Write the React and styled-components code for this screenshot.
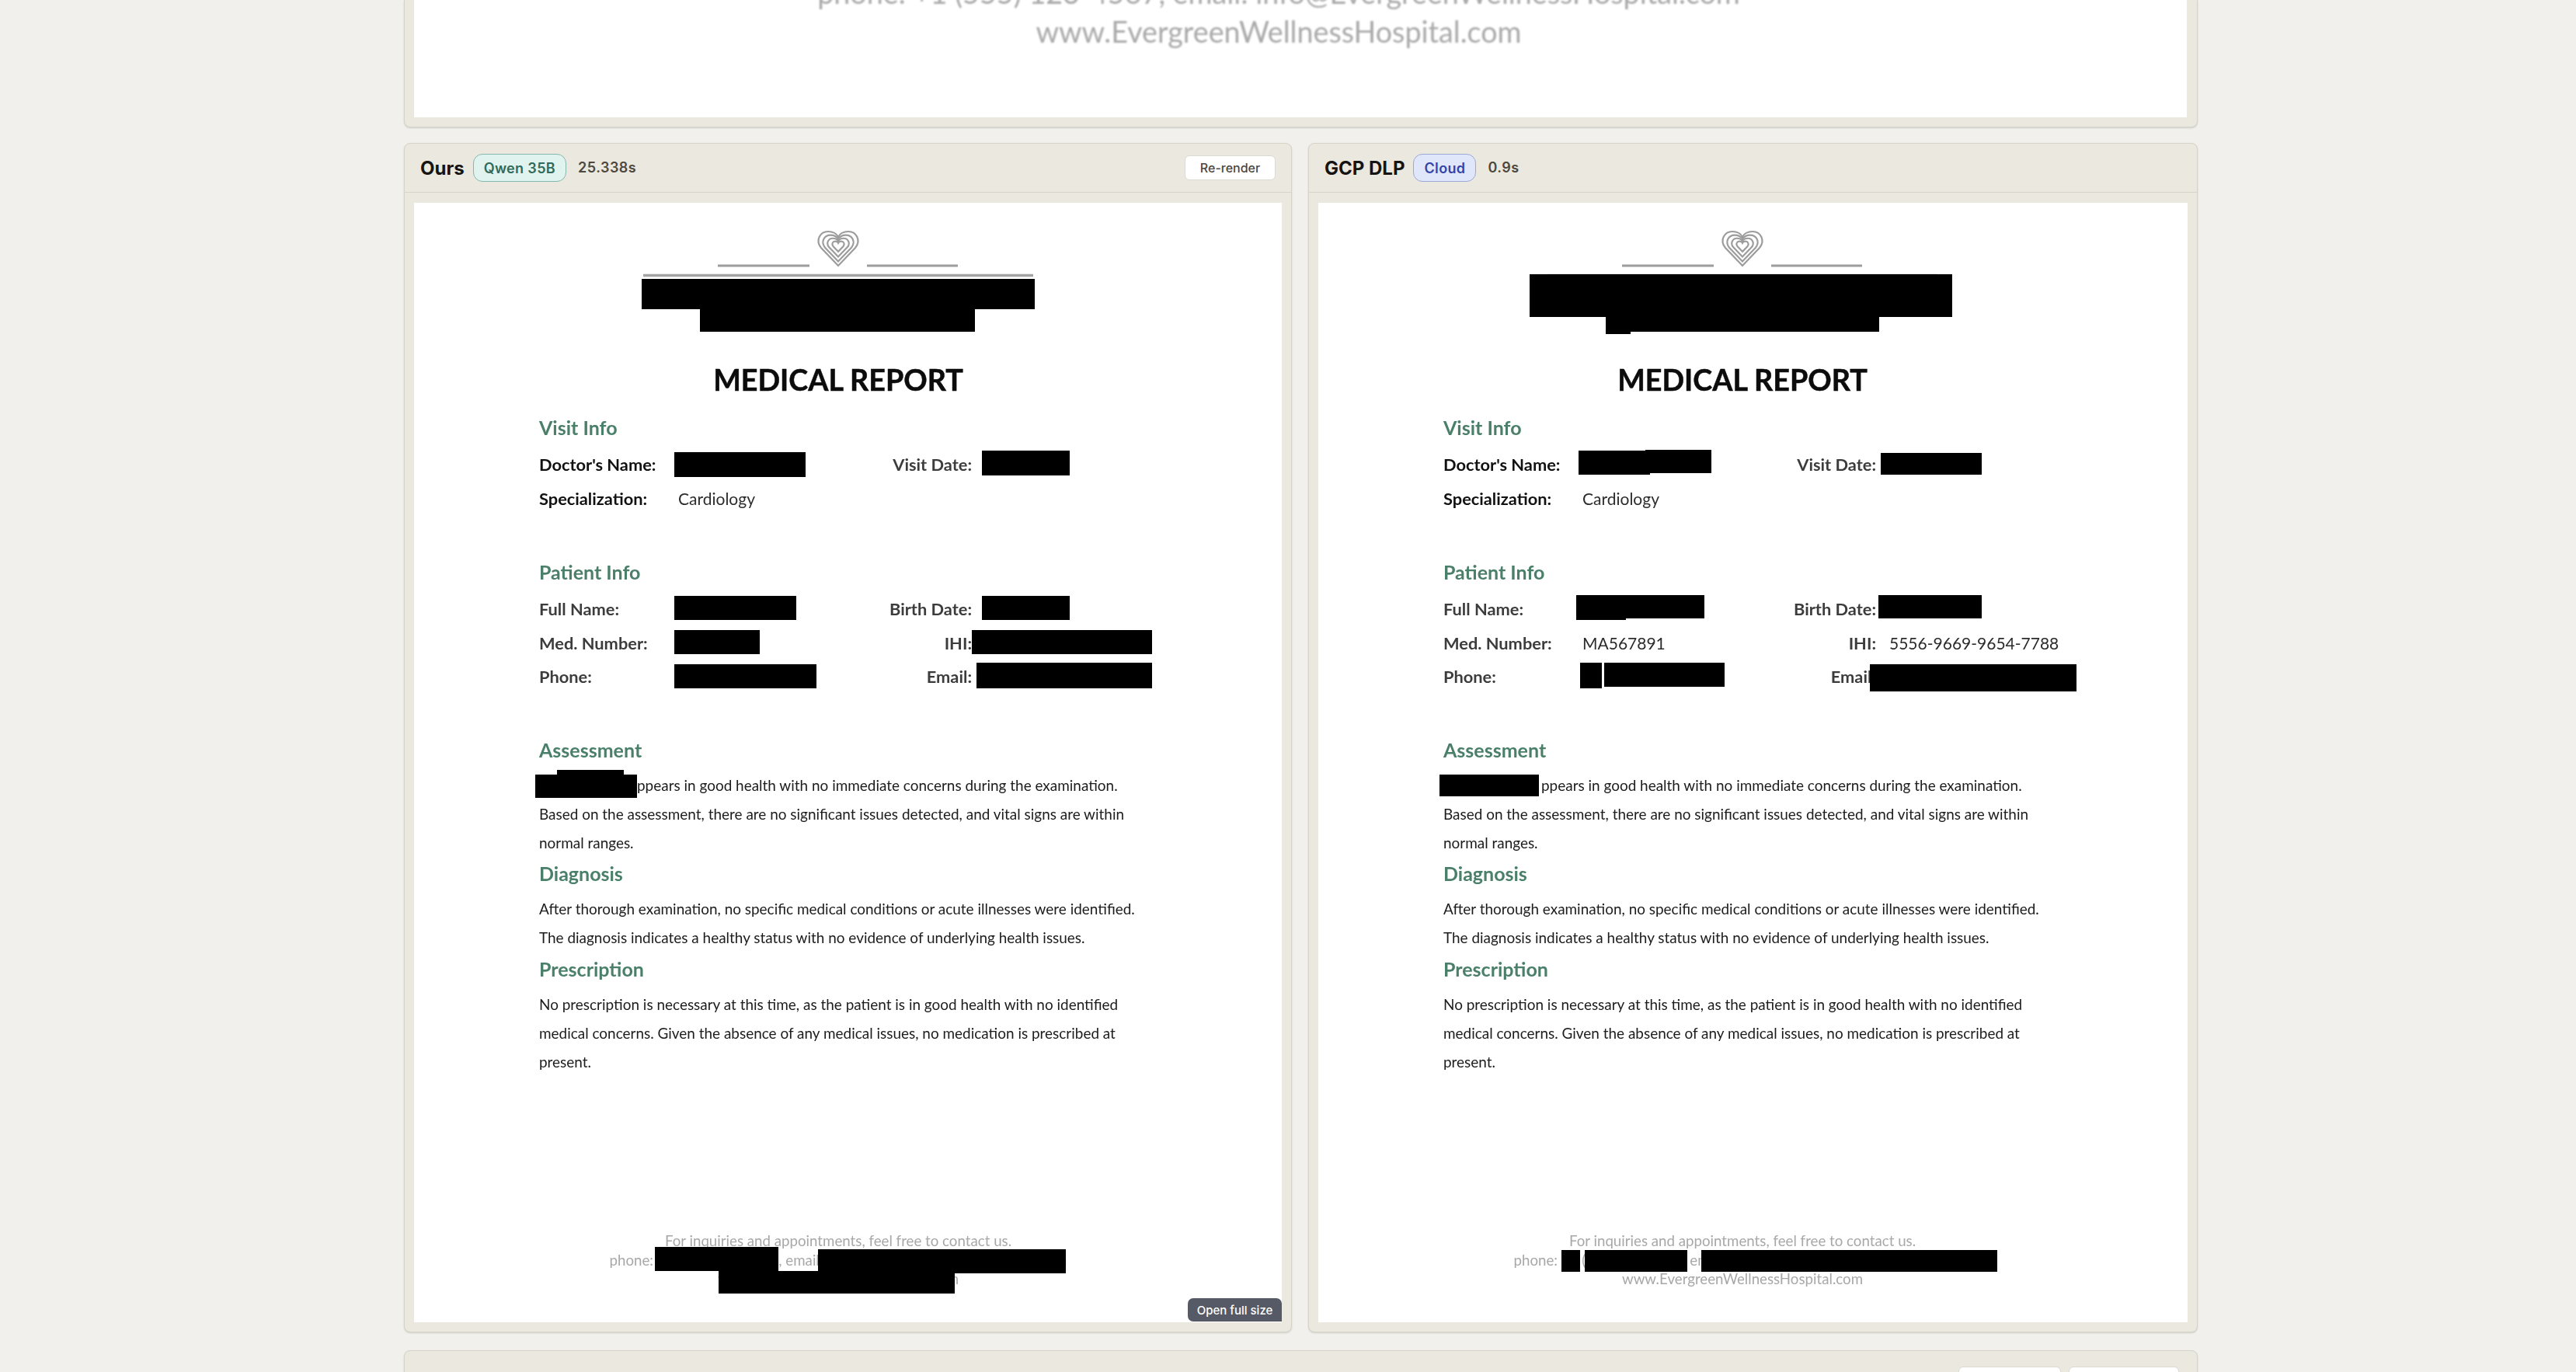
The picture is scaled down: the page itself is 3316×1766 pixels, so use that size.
import React from "react";
import styled, { createGlobalStyle } from "styled-components";

const GlobalStyle = createGlobalStyle`
  html, body {
    margin: 0;
    padding: 0;
    background: #f1f0ec;
  }
`;

const DOC_FONT = `"Lato", "Open Sans", sans-serif`;
const UI_FONT = `"Inter", "Liberation Sans", sans-serif`;

// redaction boxes, page coords: x, y, w, h
const OURS_BOXES = [
  [293, 98, 506, 39],
  [368, 136, 354, 30],
  [335, 321, 169, 32],
  [731, 319, 113, 32],
  [335, 506, 157, 31],
  [731, 506, 113, 31],
  [335, 550, 110, 31],
  [718, 550, 232, 31],
  [335, 594, 183, 31],
  [724, 592, 226, 33],
  [156, 736, 131, 30],
  [184, 730, 86, 10],
  [310, 1344, 159, 31],
  [520, 1347, 319, 31],
  [392, 1375, 304, 29],
];

const DLP_BOXES = [
  [272, 92, 544, 55],
  [370, 146, 352, 20],
  [370, 166, 32, 3],
  [335, 319, 92, 31],
  [421, 318, 85, 30],
  [724, 322, 130, 28],
  [332, 505, 165, 30],
  [332, 530, 64, 7],
  [721, 505, 133, 30],
  [337, 592, 28, 33],
  [368, 592, 155, 31],
  [710, 594, 266, 35],
  [156, 736, 128, 28],
  [313, 1348, 24, 28],
  [343, 1348, 132, 28],
  [493, 1348, 381, 28],
];

const HEART =
  "M27 46 L5 23 C-3 13 4 2 14 2 C20 2 25 5 27 9 C29 5 34 2 40 2 C50 2 57 13 49 23 Z";

const Logo = () => (
  <LogoSvg viewBox="0 0 506 62" width="506" height="62">
    <line x1="98" y1="46" x2="216" y2="46" stroke="#9c9c9c" strokeWidth="3" />
    <line x1="290" y1="46" x2="407" y2="46" stroke="#9c9c9c" strokeWidth="3" />
    <line x1="2" y1="58.5" x2="504" y2="58.5" stroke="#a4a4a4" strokeWidth="3.5" />
    <g transform="translate(226 0)" fill="none" stroke="#9c9c9c" strokeWidth="2.2">
      <path d={HEART} />
      <path d={HEART} transform="translate(27 22) scale(0.77) translate(-27 -22)" vectorEffect="non-scaling-stroke" />
      <path d={HEART} transform="translate(27 21) scale(0.54) translate(-27 -21)" vectorEffect="non-scaling-stroke" />
      <path d={HEART} transform="translate(27 20) scale(0.3) translate(-27 -20)" vectorEffect="non-scaling-stroke" />
    </g>
  </LogoSvg>
);

const Field = ({ label, value, strong }) => (
  <>
    <Label $strong={strong}>{label}</Label>
    <Value>{value}</Value>
  </>
);

const FieldRight = ({ label, value }) => (
  <>
    <Label $right>{label}</Label>
    <Value $right>{value}</Value>
  </>
);

const MedicalReport = ({ boxes, medNumber, ihi }) => (
  <Page>
    <LogoWrap>
      <Logo />
    </LogoWrap>
    <Title>MEDICAL REPORT</Title>

    <Body>
      <SectionTitle>Visit Info</SectionTitle>
      <FieldGrid>
        <Field label="Doctor's Name:" strong />
        <FieldRight label="Visit Date:" />
        <Field label="Specialization:" value="Cardiology" strong />
      </FieldGrid>

      <SectionTitle $gap={58}>Patient Info</SectionTitle>
      <FieldGrid>
        <Field label="Full Name:" />
        <FieldRight label="Birth Date:" />
        <Field label="Med. Number:" value={medNumber} />
        <FieldRight label="IHI:" value={ihi} />
        <Field label="Phone:" />
        <FieldRight label="Email:" />
      </FieldGrid>

      <SectionTitle $gap={57}>Assessment</SectionTitle>
      <Paragraph>
        <NameGap />
        ppears in good health with no immediate concerns during the examination.
        <br />
        Based on the assessment, there are no significant issues detected, and vital signs are within
        <br />
        normal ranges.
      </Paragraph>

      <SectionTitle $gap={5.5}>Diagnosis</SectionTitle>
      <Paragraph>
        After thorough examination, no specific medical conditions or acute illnesses were identified.
        <br />
        The diagnosis indicates a healthy status with no evidence of underlying health issues.
      </Paragraph>

      <SectionTitle $gap={6.5}>Prescription</SectionTitle>
      <Paragraph>
        No prescription is necessary at this time, as the patient is in good health with no identified
        <br />
        medical concerns. Given the absence of any medical issues, no medication is prescribed at
        <br />
        present.
      </Paragraph>
    </Body>

    <Footer>
      <div>For inquiries and appointments, feel free to contact us.</div>
      <div>phone: +1 (555) 123-4567, email: info@EvergreenWellnessHospital.com</div>
      <div>www.EvergreenWellnessHospital.com</div>
    </Footer>

    {boxes.map(([x, y, w, h], i) => (
      <Redaction key={i} $x={x} $y={y} $w={w} $h={h} />
    ))}
  </Page>
);

const App = () => (
  <>
    <GlobalStyle />
    <Viewport>
      <Column>
        <TopCard>
          <TopPage>
            <TopFooter>
              <div>phone: +1 (555) 123-4567, email: info@EvergreenWellnessHospital.com</div>
              <div>www.EvergreenWellnessHospital.com</div>
            </TopFooter>
          </TopPage>
        </TopCard>

        <CompareRow>
          <Card>
            <CardHeader>
              <CardTitle>Ours</CardTitle>
              <Pill $kind="local">Qwen 35B</Pill>
              <Timing>25.338s</Timing>
              <RerenderButton>Re-render</RerenderButton>
            </CardHeader>
            <CardBody>
              <MedicalReport boxes={OURS_BOXES} />
              <OpenButton>Open full size</OpenButton>
            </CardBody>
          </Card>

          <Card>
            <CardHeader>
              <CardTitle>GCP DLP</CardTitle>
              <Pill $kind="cloud">Cloud</Pill>
              <Timing>0.9s</Timing>
            </CardHeader>
            <CardBody>
              <MedicalReport boxes={DLP_BOXES} medNumber="MA567891" ihi="5556-9669-9654-7788" />
            </CardBody>
          </Card>
        </CompareRow>

        <BottomCard>
          <BottomActions>
            <GhostButton $w={132} />
            <GhostButton $w={142} />
          </BottomActions>
        </BottomCard>
      </Column>
    </Viewport>
  </>
);

export default App;

const Viewport = styled.div`
  height: 1766px;
  overflow: hidden;
  background: #f1f0ec;
`;

const Column = styled.div`
  width: 2309px;
  margin-left: 520px;
  display: flex;
  flex-direction: column;
`;

const Card = styled.section`
  box-sizing: border-box;
  background: #ebe8df;
  border: 1px solid #d6d3c8;
  border-radius: 8px;
  box-shadow: 0 1px 2px rgba(60, 55, 40, 0.18);
`;

const TopCard = styled(Card)`
  height: 164px;
  border-top: none;
  border-radius: 0 0 8px 8px;
  padding: 0 13px 0 12px;
`;

const TopPage = styled.div`
  height: 151px;
  background: #fff;
  overflow: hidden;
`;

const TopFooter = styled.div`
  margin-top: -34px;
  padding-right: 56px;
  text-align: center;
  font-family: ${DOC_FONT};
  font-size: 37.7px;
  line-height: 50px;
  color: #a9a9a9;
  filter: blur(0.8px);
`;

const CompareRow = styled.div`
  display: grid;
  grid-template-columns: 1143px 1145px;
  column-gap: 21px;
  margin-top: 20px;
`;

const BottomCard = styled(Card)`
  height: 60px;
  margin-top: 23px;
  padding: 20px 23px 0 0;
`;

const BottomActions = styled.div`
  display: flex;
  justify-content: flex-end;
  gap: 10px;
`;

const GhostButton = styled.div`
  width: ${(p) => p.$w}px;
  height: 34px;
  background: #fff;
  border: 1px solid #dcd9cf;
  border-radius: 6px;
  box-sizing: border-box;
`;

const CardHeader = styled.header`
  box-sizing: border-box;
  height: 63px;
  display: flex;
  align-items: center;
  padding: 0 20px 0 20px;
  border-bottom: 1px solid #d6d3c8;
`;

const CardTitle = styled.h3`
  margin: 0 11px 0 0;
  font-family: ${UI_FONT};
  font-size: 24px;
  font-weight: 700;
  color: #161412;
`;

const PILL_COLORS = {
  local: { bg: "#e0f3ef", border: "#86b8ad", color: "#2f6a5c" },
  cloud: { bg: "#e0e7fb", border: "#9aa8d8", color: "#3345a8" },
};

const Pill = styled.span`
  box-sizing: border-box;
  height: 36px;
  padding: 0 13px;
  display: inline-flex;
  align-items: center;
  border-radius: 12px;
  font-family: ${UI_FONT};
  font-size: 18px;
  font-weight: 600;
  letter-spacing: 0.35px;
  background: ${(p) => PILL_COLORS[p.$kind].bg};
  border: 1px solid ${(p) => PILL_COLORS[p.$kind].border};
  color: ${(p) => PILL_COLORS[p.$kind].color};
`;

const Timing = styled.span`
  margin: -2px 0 0 15px;
  font-family: ${UI_FONT};
  font-size: 18px;
  font-weight: 600;
  letter-spacing: 0.5px;
  color: #4d4840;
`;

const RerenderButton = styled.button`
  margin-left: auto;
  box-sizing: border-box;
  width: 117px;
  height: 32px;
  padding: 0;
  background: #fff;
  border: 1px solid #dcd9cf;
  border-radius: 6px;
  font-family: ${UI_FONT};
  font-size: 16px;
  font-weight: 500;
  color: #4a4640;
`;

const CardBody = styled.div`
  position: relative;
  height: 1441px;
  margin: 13px 12px 12px;
  box-sizing: border-box;
`;

const OpenButton = styled.button`
  position: absolute;
  right: 0;
  bottom: 1px;
  box-sizing: border-box;
  width: 121px;
  height: 30px;
  padding: 0;
  border: none;
  border-radius: 7px 7px 0 7px;
  background: #565966;
  color: #fff;
  font-family: ${UI_FONT};
  font-size: 15px;
  font-weight: 500;
`;

const Page = styled.article`
  position: relative;
  box-sizing: border-box;
  height: 1441px;
  padding-top: 35px;
  background: #fff;
  font-family: ${DOC_FONT};
  overflow: hidden;
`;

const Redaction = styled.div`
  position: absolute;
  left: ${(p) => p.$x}px;
  top: ${(p) => p.$y}px;
  width: ${(p) => p.$w}px;
  height: ${(p) => p.$h}px;
  background: #000;
`;

const LogoWrap = styled.div`
  width: 1092px;
  display: flex;
  justify-content: center;
  filter: blur(0.5px);
`;

const LogoSvg = styled.svg`
  display: block;
`;

const Title = styled.h1`
  width: 1092px;
  margin: 107px 0 0;
  text-align: center;
  font-size: 37.7px;
  line-height: 48px;
  font-weight: 700;
  color: #0c0c0c;
  -webkit-text-stroke: 0.5px #0c0c0c;
  filter: blur(0.4px);
`;

const Body = styled.div`
  padding: 22px 0 0 161px;
  filter: blur(0.4px);
`;

const SectionTitle = styled.h2`
  margin: ${(p) => p.$gap || 0}px 0 0;
  font-size: 25px;
  line-height: 30px;
  font-weight: 700;
  color: #4a7f6a;
`;

const FieldGrid = styled.div`
  display: grid;
  grid-template-columns: 179px 199px 179px 1fr;
  grid-auto-rows: 43.5px;
  margin-top: 11px;
  line-height: 43.5px;
`;

const Label = styled.div`
  font-size: 21.8px;
  font-weight: 700;
  color: ${(p) => (p.$strong ? "#111" : "#3c3c3c")};
  text-align: ${(p) => (p.$right ? "right" : "left")};
`;

const Value = styled.div`
  font-size: 21px;
  color: #2c2c2c;
  padding-left: ${(p) => (p.$right ? "17px" : "0")};
`;

const Paragraph = styled.p`
  margin: 12.5px 0 0;
  font-size: 18.95px;
  line-height: 37px;
  color: #1c1c1c;
  white-space: nowrap;
`;

const NameGap = styled.span`
  display: inline-block;
  width: 126px;
`;

const Footer = styled.footer`
  width: 1092px;
  margin-top: 200px;
  text-align: center;
  font-size: 18.7px;
  line-height: 24.5px;
  color: #a8a8a8;
  filter: blur(0.4px);
`;
